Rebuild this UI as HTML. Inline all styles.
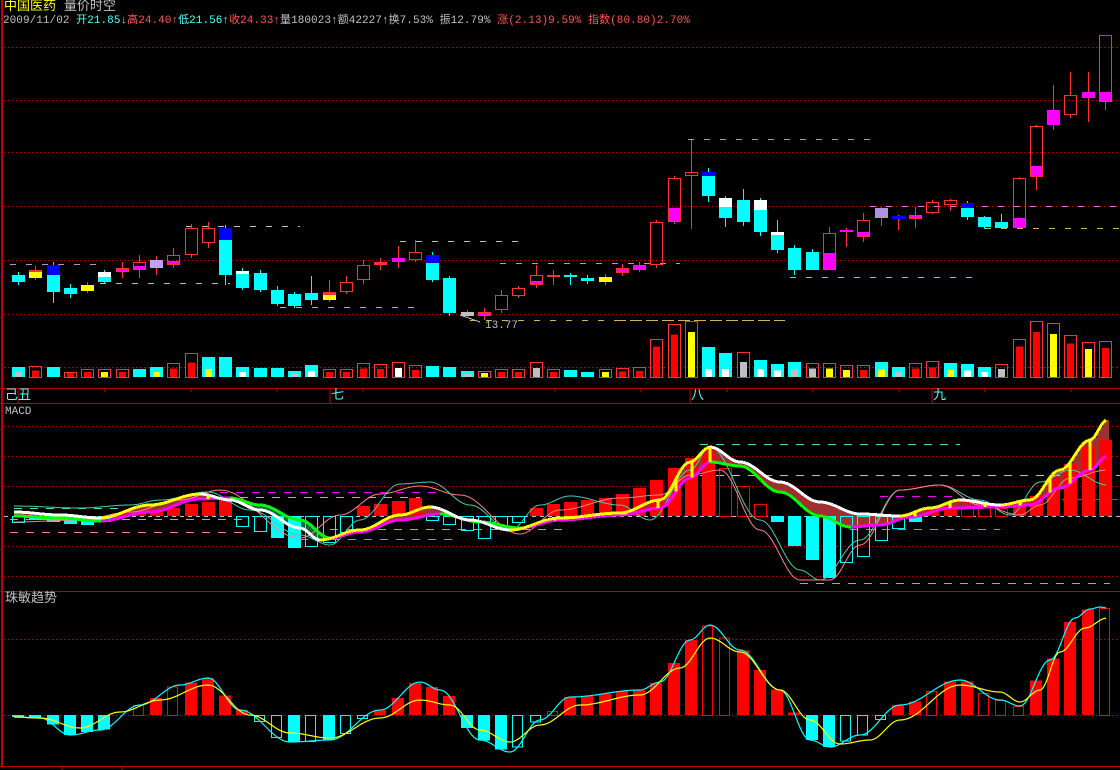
<!DOCTYPE html>
<html><head><meta charset="utf-8"><style>
html,body{margin:0;padding:0;background:#000;}
body{width:1120px;height:770px;overflow:hidden;position:relative;font-family:"Liberation Mono","WenQuanYi Zen Hei",monospace;}
.t{position:absolute;font-size:12px;white-space:nowrap;line-height:14px;font-family:"Liberation Mono","Noto Sans CJK SC",monospace;}
svg{position:absolute;left:0;top:0;}
</style></head><body>
<svg id="s" width="1120" height="770" xmlns="http://www.w3.org/2000/svg" shape-rendering="crispEdges"></svg>
<div class="t" style="left:4px;top:0px;font-size:13px"><span style="color:#ffff00">中国医药</span> <span style="color:#c0c0c0">量价时空</span></div>
<div class="t" style="left:3px;top:14px;font-size:11px;letter-spacing:0.05px"><span style="color:#c0c0c0">2009/11/02 </span><span style="color:#54ffff">开21.85↓</span><span style="color:#ff5454">高24.40↑</span><span style="color:#54ffff">低21.56↑</span><span style="color:#ff5454">收24.33↑</span><span style="color:#c0c0c0">量180023↑额42227↑换7.53% 振12.79% </span><span style="color:#ff5454">涨(2.13)9.59% 指数(80.80)2.70%</span></div>
<div class="t" style="left:5px;top:389px;color:#54ffff;font-size:13px">己丑</div>
<div class="t" style="left:331px;top:389px;color:#54ffff;font-size:13px">七</div>
<div class="t" style="left:691px;top:389px;color:#54ffff;font-size:13px">八</div>
<div class="t" style="left:933px;top:389px;color:#54ffff;font-size:13px">九</div>
<div class="t" style="left:5px;top:405px;color:#c0c0c0;font-size:11px">MACD</div>
<div class="t" style="left:5px;top:592px;color:#c0c0c0;font-size:13px">珠敏趋势</div>
<div class="t" style="left:485px;top:319px;color:#c0c0c0;font-size:11px">13.77</div>
<script>
var s=document.getElementById('s'),h='';
function L(x1,y1,x2,y2,c,w,d){h+='<line x1="'+x1+'" y1="'+y1+'" x2="'+x2+'" y2="'+y2+'" stroke="'+c+'" stroke-width="'+(w||1)+'"'+(d?' stroke-dasharray="'+d+'"':'')+'/>';}
function R(x,y,w,hh,f,st){if(hh<0){y+=hh;hh=-hh;}h+='<rect x="'+x+'" y="'+y+'" width="'+w+'" height="'+Math.max(hh,1)+'" fill="'+(f||'none')+'"'+(st?' stroke="'+st+'"':'')+'/>';}
var RED='#ff3232',CY='#00ffff';
L(2,0,2,770,'#c00000',2);
L(0,388.5,1120,388.5,'#c00000');L(0,403.5,1120,403.5,'#c00000');L(0,591.5,1120,591.5,'#c00000');L(0,766.5,1120,766.5,'#c00000');
[47,100,152,206,260,314,367].forEach(function(y){L(4,y+.5,1120,y+.5,'#c00000',1,'1 3');});
[426,456,486,546,576].forEach(function(y){L(4,y+.5,1120,y+.5,'#c00000',1,'1 3');});
[639,715].forEach(function(y){L(4,y+.5,1120,y+.5,'#c00000',1,'1 3');});
L(4,516.5,1120,516.5,'#c0c0c0',1,'4 4');
[105,191,277,363,555,641,727,813,899,985,1071].forEach(function(x){L(x,389,x,392,'#c00000');});
L(18,389,18,403,'#c00000');L(330,389,330,403,'#c00000');L(690,389,690,403,'#c00000');L(932,389,932,403,'#c00000');
L(10,264.5,100,264.5,'#b090e0',1,'6 10');L(186,226.5,300,226.5,'#c0c0c0',1,'6 10');L(400,241.5,525,241.5,'#c0c0c0',1,'6 10');
L(100,283.5,230,283.5,'#c0c0c0',1,'6 10');L(280,307.5,420,307.5,'#d4b050',1,'6 10');L(470,320.5,790,320.5,'#d4b050',1,'6 10');
L(688,139.5,870,139.5,'#b090e0',1,'6 10');L(500,263.5,680,263.5,'#b090e0',1,'6 10');L(870,206.5,1120,206.5,'#b090e0',1,'6 10');
L(790,277.5,975,277.5,'#d4b050',1,'6 10');L(985,228.5,1120,228.5,'#d4b050',1,'6 10');L(620,320.5,785,320.5,'#d4b050',1,'6 10');
L(460,315,480,322,'#c0c0c0');
var C=[[275,282,'d',CY,272,285],[270,278,'d','#ffff00',266,280,RED,2],[265,292,'d',CY,262,303,'#0000ff',10],[288,294,'d',CY,284,298],[285,291,'d','#ffff00',282,293],[272,282,'d',CY,270,284,'#fff',5],[268,272,'u','#ff00ff',262,278],[262,270,'u','#ff00ff',255,278],[260,268,'d','#c0a0ff',256,275],[255,265,'u','#ff00ff',248,268],
[228,255,'u','',224,258],[228,243,'u','',222,248],[228,275,'d',CY,225,285,'#0000ff',12],[271,288,'d',CY,268,290,'#fff',3],[273,290,'d',CY,270,292],[290,304,'d',CY,286,306],[294,306,'d',CY,292,308],[293,300,'d',CY,276,305],[292,300,'d','#ffff00',280,302,RED,3],[282,292,'u','',276,294],
[265,280,'u','',260,284],[262,265,'u','#ff00ff',258,270],[258,262,'d','#ff00ff',246,268],[252,260,'u','',240,262],[255,280,'d',CY,252,282,'#0000ff',8],[278,313,'d',CY,276,316],[312,316,'d','#c0c0c0',310,318],[312,316,'u','#ff00ff',308,320],[295,310,'u','',290,313],[288,296,'u','',286,298],
[275,285,'u','#ff00ff',265,288],[275,277,'u','',270,285],[275,277,'d',CY,273,285],[278,281,'d',CY,275,284],[277,282,'d','#ffff00',274,285],[268,273,'u','#ff00ff',264,276],[265,270,'u','#ff00ff',262,272],[222,265,'u','',220,268],[178,222,'u','#ff00ff',176,224,'',0,208],[172,176,'u','',140,229],
[172,196,'d',CY,168,202,'#0000ff',4],[198,218,'d',CY,196,227,'#fff',9],[200,222,'d',CY,189,226],[200,232,'d',CY,198,236,'#fff',10],[232,250,'d',CY,220,253,'#fff',3],[248,270,'d',CY,245,275],[252,270,'d',CY,249,270],[233,270,'u','#ffff00',227,270,'',0,253],[230,232,'d','#ff00ff',228,247],[220,237,'u','#ff00ff',213,242,'',0,232],
[208,218,'d','#b090e0',207,226],[216,219,'d','#0000ff',215,230],[215,219,'u','#ff00ff',207,228],[202,213,'u','#ff00ff',200,214,'',0,212],[200,205,'u','',199,211],[203,217,'d',CY,201,220,'#0000ff',5],[217,227,'d',CY,216,229],[222,228,'d',CY,214,228],[178,228,'u','#ffff00',177,228,'',0,218],[126,177,'u','#ff00ff',125,190,'',0,166],
[110,125,'d','#ff00ff',85,130],[95,115,'u','',72,118],[92,98,'d','#ff00ff',72,122],[35,102,'u','#ff00ff',35,110,'',0,92]];
var V=[[10,'d','#c0c0c0'],[11,'u','#ff0000'],[10,'d',CY],[5,'u','#ff0000'],[8,'u','#ff0000'],[8,'u','#ffff00'],[8,'u','#ff0000'],[8,'d',CY],[10,'d','#ffff00'],[14,'u','#ff0000'],[24,'u','#ff0000'],[20,'d','#ffff00'],[20,'d',CY],[10,'d','#fff'],[9,'d',CY],[9,'d',CY],[6,'d','#c0c0c0'],[12,'d','#fff'],[8,'u','#ff0000'],[8,'u','#ff0000'],
[14,'u','#ff0000'],[13,'u','#ff0000'],[15,'u','#fff'],[12,'u','#ff0000'],[11,'d',CY],[10,'d',CY],[6,'d','#c0c0c0'],[6,'u','#ffff00'],[8,'u','#ff0000'],[8,'u','#ff0000'],
[15,'u','#c0c0c0'],[8,'u','#ff0000'],[7,'d',CY],[5,'d',CY],[8,'u','#ffff00'],[9,'u','#ff0000'],[10,'u','#ff0000'],[38,'u','#ff0000'],[53,'u','#ff0000'],[56,'u','#ffff00'],[30,'d','#fff'],[24,'d','#fff'],[25,'u','#c0c0c0'],[17,'d','#fff'],[13,'d','#fff'],[15,'d','#c0c0c0'],[14,'u','#c0c0c0'],[14,'u','#ffff00'],[12,'u','#ffff00'],[12,'u','#ff0000'],
[15,'d','#ffff00'],[10,'d','#c0c0c0'],[14,'u','#ff0000'],[16,'u','#ff0000'],[14,'d','#ffff00'],[13,'d','#fff'],[10,'d','#fff'],[13,'u','#c0c0c0'],[38,'u','#ff0000'],[56,'u','#ff0000'],[54,'u','#ffff00'],[42,'u','#ff0000'],[35,'u','#ffff00'],[36,'u','#ff0000']];
function X(i){return Math.round(18+i*17.25);}
C.forEach(function(c,i){var x=X(i),w=13,l=x-6;
 if(c[2]=='u'){L(x+.5,c[4],x+.5,c[0],RED);L(x+.5,c[1],x+.5,c[5],RED);
  if(c[8]){R(l,c[8],w,c[1]-c[8],'#ff00ff');}
  else if(c[3]&&c[1]-c[0]<8)R(l,c[0],w,c[1]-c[0],c[3]);
  else if(c[3])R(l,c[1]-4,w,4,c[3]);
  R(l+.5,c[0]+.5,w-1,c[1]-c[0]-1,'none',RED);}
 else{L(x+.5,c[4],x+.5,c[5],c[3]==CY?CY:RED);R(l,c[0],w,c[1]-c[0],c[3]);if(c[6])R(l,c[0],w,c[7],c[6]);}
});
V.forEach(function(v,i){var x=X(i),l=x-6,hh=v[0],y=377-hh;
 if(v[1]=='u'){R(l+.5,y+.5,12,hh,'none',RED);var ih=hh>30?hh*.8:Math.max(4,hh*.6);R(l+3,377-ih,7,ih,v[2]);}
 else{R(l,y,13,hh,CY);R(l+3,377-Math.min(8,hh*.5),7,Math.min(8,hh*.5),v[2]);}
});
function I(pts,x){for(var k=0;k<pts.length-1;k++){if(x>=pts[k][0]&&x<=pts[k+1][0]){var t=(x-pts[k][0])/(pts[k+1][0]-pts[k][0]);t=(1-Math.cos(t*Math.PI))/2;return pts[k][1]+(pts[k+1][1]-pts[k][1])*t;}}return pts[pts.length-1][1];}
var DIF=[[14,512],[60,515],[100,518],[150,505],[200,494],[230,500],[260,510],[300,528],[320,540],[360,530],[400,515],[430,507],[470,520],[510,530],[560,518],[620,513],[660,500],[690,462],[710,447],[740,462],[780,482],[820,502],[860,514],[900,516],[930,508],[960,500],[1000,505],[1030,500],[1060,470],[1090,440],[1107,420]];
var DEA=[[14,516],[60,518],[100,521],[150,512],[200,499],[230,498],[260,505],[300,520],[330,538],[360,532],[400,520],[440,514],[480,522],[520,528],[560,520],[620,515],[660,508],[690,478],[710,462],[740,466],[780,492],[820,516],[850,527],[880,525],[910,517],[950,508],[1000,507],[1030,505],[1060,488],[1090,470],[1107,456]];
var TH=[[14,506],[80,508],[130,505],[160,500],[208,492],[250,510],[300,535],[330,545],[360,520],[400,484],[430,482],[470,505],[510,530],[540,505],[570,496],[620,505],[650,520],[690,470],[710,447],[760,520],[800,570],[820,580],[860,540],[900,490],[940,485],[980,500],[1010,515],[1040,482],[1070,470],[1107,485]];
var TP=[[14,522],[80,520],[130,512],[180,500],[220,490],[300,538],[340,515],[380,494],[420,486],[460,495],[520,534],[560,510],[620,498],[660,495],[690,475],[720,470],[760,530],[800,580],[830,580],[860,545],[900,490],[940,485],[980,505],[1020,515],[1040,505],[1070,478],[1107,470]];
function path(pts,fn,c,w){var d='';for(var x=pts[0][0];x<=1107;x+=2)d+=(d?'L':'M')+x+' '+fn(pts,x).toFixed(1);h+='<path d="'+d+'" fill="none" stroke="'+c+'" stroke-width="'+w+'" shape-rendering="auto"/>';}
for(var x=14;x<1107;x+=3){var a=I(DIF,x),b=I(DEA,x);R(x,Math.min(a,b),3,Math.abs(a-b),a<b?'#a03030':'#106840');}
L(14,508.5,120,508.5,'#40e0c0',1,'8 8');L(10,519.5,250,519.5,'#40e0c0',1,'8 8');L(10,532.5,250,532.5,'#ff8080',1,'8 8');L(220,492.5,440,492.5,'#ff00ff',1,'8 8');L(240,497.5,420,497.5,'#40e0c0',1,'8 8');L(300,539.5,460,539.5,'#00ff00',1,'8 8');L(330,529.5,570,529.5,'#ff8080',1,'8 8');L(700,444.5,960,444.5,'#40e0c0',1,'8 8');L(700,475.5,1120,475.5,'#c0c0c0',1,'8 8');L(880,496.5,960,496.5,'#ff00ff',1,'8 8');L(800,583.5,1110,583.5,'#ff8080',1,'8 8');L(850,529.5,1000,529.5,'#00ff00',1,'8 8');L(1030,499.5,1120,499.5,'#ff00ff',1,'8 8');
var HB=[-6,-4,-6,-8,-9,-6,3,4,6,8,12,14,16,-10,-15,-22,-32,-30,-26,-16,10,12,15,18,-4,-8,-14,-22,-12,-6,8,12,14,16,18,22,28,36,48,58,66,48,30,12,-6,-30,-44,-62,-46,-40,-24,-12,-6,6,10,14,12,8,10,20,38,52,70,76];
var HH=[1,0,0,0,0,0,0,0,0,0,0,0,0,1,1,0,0,1,1,1,0,0,0,0,1,1,1,1,1,1,0,0,0,0,0,0,0,0,0,0,0,1,1,1,0,0,0,0,1,1,1,1,0,0,0,1,1,1,0,0,0,0,0,0];
HB.forEach(function(v,i){var x=X(i)-6;var up=v>0;var col=up?'#ff0000':CY;if(HH[i])R(x+.5,up?516.5-v:516.5,12,Math.abs(v),'none',col);else R(x,up?516-v:516,13,Math.abs(v),col);});
path(TH,I,'#40d0b0',1);path(TP,I,'#ff8080',1);
for(var x=14;x<1105;x+=3){var a=I(DIF,x),a2=I(DIF,x+3),b=I(DEA,x),b2=I(DEA,x+3);
 h+='<line x1="'+x+'" y1="'+b+'" x2="'+(x+3)+'" y2="'+b2+'" stroke="'+(b2<=b?'#ff00ff':'#00ff00')+'" stroke-width="3"/>';
 h+='<line x1="'+x+'" y1="'+a+'" x2="'+(x+3)+'" y2="'+a2+'" stroke="'+(a2<=a?'#ffff00':'#ffffff')+'" stroke-width="3"/>';}
[208,242,520,555,590,625,658,676,692,710,915,950,985,1020,1050,1070,1090].forEach(function(x){var a=I(DIF,x),b=I(DEA,x);if(a<b-2)L(x,a,x,b,'#ffff00',3);});
var CL=[[14,717],[40,718],[70,735],[100,730],[140,705],[180,685],[208,678],[240,710],[290,742],[330,740],[380,710],[420,682],[440,690],[480,740],[510,752],[540,720],[570,697],[640,690],[660,682],[690,640],[710,625],[740,650],[780,690],[810,740],[830,747],[860,735],[900,705],[960,680],[1000,700],[1020,706],[1050,660],[1075,618],[1090,609],[1100,607],[1107,608]];
var YL=[[14,717],[40,718],[80,728],[120,712],[160,700],[208,685],[250,715],[290,733],[330,738],[380,718],[420,700],[450,705],[480,730],[510,742],[540,725],[580,705],[640,695],[680,668],[710,638],[740,652],[780,690],[810,720],[840,744],[870,740],[900,720],[960,685],[1000,692],[1020,702],[1040,690],[1060,652],[1085,628],[1107,618]];
for(var i=0;i<64;i++){var x=X(i),v=I(CL,x)-715;var hol=[7,9,14,15,17,19,20,29,30,31,40,41,48,49,50,53,56,57,58,63].indexOf(i)>=0&&Math.abs(v)>2;var col=v<0?'#ff0000':CY;
 if(Math.abs(v)<2)continue; if(hol)R(x-5.5,v<0?715.5+v:715.5,10,Math.abs(v),'none',col);else R(x-6,v<0?715+v:715,12,Math.abs(v),col);}
path(CL,I,CY,1.2);path(YL,I,'#ffff00',1.2);
R(0,767,1120,3,'#000');L(62,767,62,770,'#c00000');L(122,767,122,770,'#c00000');
s.innerHTML=h;
</script>
</body></html>
